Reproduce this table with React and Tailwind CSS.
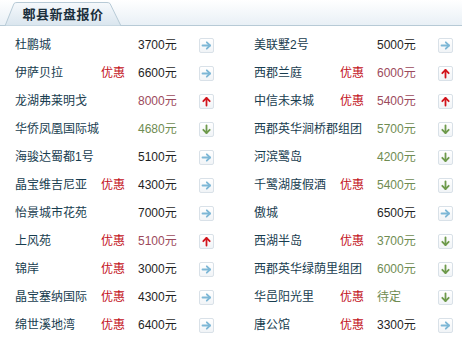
import React from 'react';

const rows = [
  [
    { name: '杜鹏城', price: '3700元', trend: 'flat' },
    { name: '美联墅2号', price: '5000元', trend: 'flat' },
  ],
  [
    { name: '伊萨贝拉', promo: true, price: '6600元', trend: 'flat' },
    { name: '西郡兰庭', promo: true, price: '6000元', trend: 'up' },
  ],
  [
    { name: '龙湖弗莱明戈', price: '8000元', trend: 'up' },
    { name: '中信未来城', promo: true, price: '5400元', trend: 'up' },
  ],
  [
    { name: '华侨凤凰国际城', price: '4680元', trend: 'down' },
    { name: '西郡英华涧桥郡组团', price: '5700元', trend: 'down' },
  ],
  [
    { name: '海骏达蜀都1号', price: '5100元', trend: 'flat' },
    { name: '河滨鹭岛', price: '4200元', trend: 'down' },
  ],
  [
    { name: '晶宝维吉尼亚', promo: true, price: '4300元', trend: 'flat' },
    { name: '千鹭湖度假酒', promo: true, price: '5400元', trend: 'down' },
  ],
  [
    { name: '怡景城市花苑', price: '7000元', trend: 'flat' },
    { name: '傲城', price: '6500元', trend: 'flat' },
  ],
  [
    { name: '上风苑', promo: true, price: '5100元', trend: 'up' },
    { name: '西湖半岛', promo: true, price: '3700元', trend: 'down' },
  ],
  [
    { name: '锦岸', promo: true, price: '3000元', trend: 'flat' },
    { name: '西郡英华绿荫里组团', price: '6000元', trend: 'down' },
  ],
  [
    { name: '晶宝塞纳国际', promo: true, price: '4300元', trend: 'flat' },
    { name: '华邑阳光里', promo: true, price: '待定', trend: 'down' },
  ],
  [
    { name: '绵世溪地湾', promo: true, price: '6400元', trend: 'flat' },
    { name: '唐公馆', promo: true, price: '3300元', trend: 'flat' },
  ],
];

const priceColor = {
  flat: 'text-[#1f1f1f]',
  up: 'text-[#9c4a5c]',
  down: 'text-[#6f8c52]',
};

const TrendIcon = ({ trend }) => (
  <span className="flex h-[15px] w-[15px] items-center justify-center rounded-[2px] border border-[#d9e1e8] bg-gradient-to-b from-white to-[#f1f4f7]">
    <svg width="11" height="11" viewBox="0 0 11 11" fill="none" strokeWidth="1.8" strokeLinecap="round" strokeLinejoin="round">
      {trend === 'flat' && (
        <g stroke="#7db7d6">
          <path d="M1.5 5.5h7.5" />
          <path d="M5.8 2.3l3.2 3.2-3.2 3.2" />
        </g>
      )}
      {trend === 'up' && (
        <g stroke="#d2141c">
          <path d="M5.5 9.5V2" />
          <path d="M2.3 5.2l3.2-3.2 3.2 3.2" />
        </g>
      )}
      {trend === 'down' && (
        <g stroke="#6e9a4c">
          <path d="M5.5 1.5V9" />
          <path d="M2.3 5.8l3.2 3.2 3.2-3.2" />
        </g>
      )}
    </svg>
  </span>
);

const Cell = ({ item }) => (
  <div className="flex h-[28px] items-center pl-[15px]">
    <span className="w-[86px] whitespace-nowrap text-[#183d50]">{item.name}</span>
    <span className="w-[37px] text-[#c3121c]">{item.promo ? '优惠' : ''}</span>
    <span className={`w-[61px] ${priceColor[item.trend]}`}>{item.price}</span>
    <TrendIcon trend={item.trend} />
  </div>
);

export default function App() {
  return (
    <div className="h-[341px] w-[462px] overflow-hidden bg-white text-[12px] leading-none [font-family:'Liberation_Sans','Noto_Sans_CJK_SC',sans-serif]">
      <div className="flex h-[26px] items-end border-b border-[#b7cad6] bg-gradient-to-b from-white to-[#e9f0f6] pl-[5px]">
        <div className="relative flex h-[23px] w-[116px] items-center justify-center">
          <svg className="absolute inset-0" width="116" height="24" viewBox="0 0 116 24">
            <defs>
              <linearGradient id="tab" x1="0" y1="0" x2="0" y2="1">
                <stop offset="0" stopColor="#f6f9fc" />
                <stop offset="1" stopColor="#d9e5ee" />
              </linearGradient>
            </defs>
            <path d="M0 24 L9 1.5 Q10 0.5 12 0.5 L102 0.5 Q104 0.5 105 1.5 L116 24 Z" fill="url(#tab)" stroke="#b7cad6" />
          </svg>
          <span className="relative mt-[1px] text-[13px] font-bold tracking-[0.5px] text-[#1b2f3c]">郫县新盘报价</span>
        </div>
      </div>
      <div className="w-[478px] pt-[5px]">
        {rows.map((pair, i) => (
          <div key={i} className="grid grid-cols-[239px_239px]">
            <Cell item={pair[0]} />
            <Cell item={pair[1]} />
          </div>
        ))}
      </div>
    </div>
  );
}
